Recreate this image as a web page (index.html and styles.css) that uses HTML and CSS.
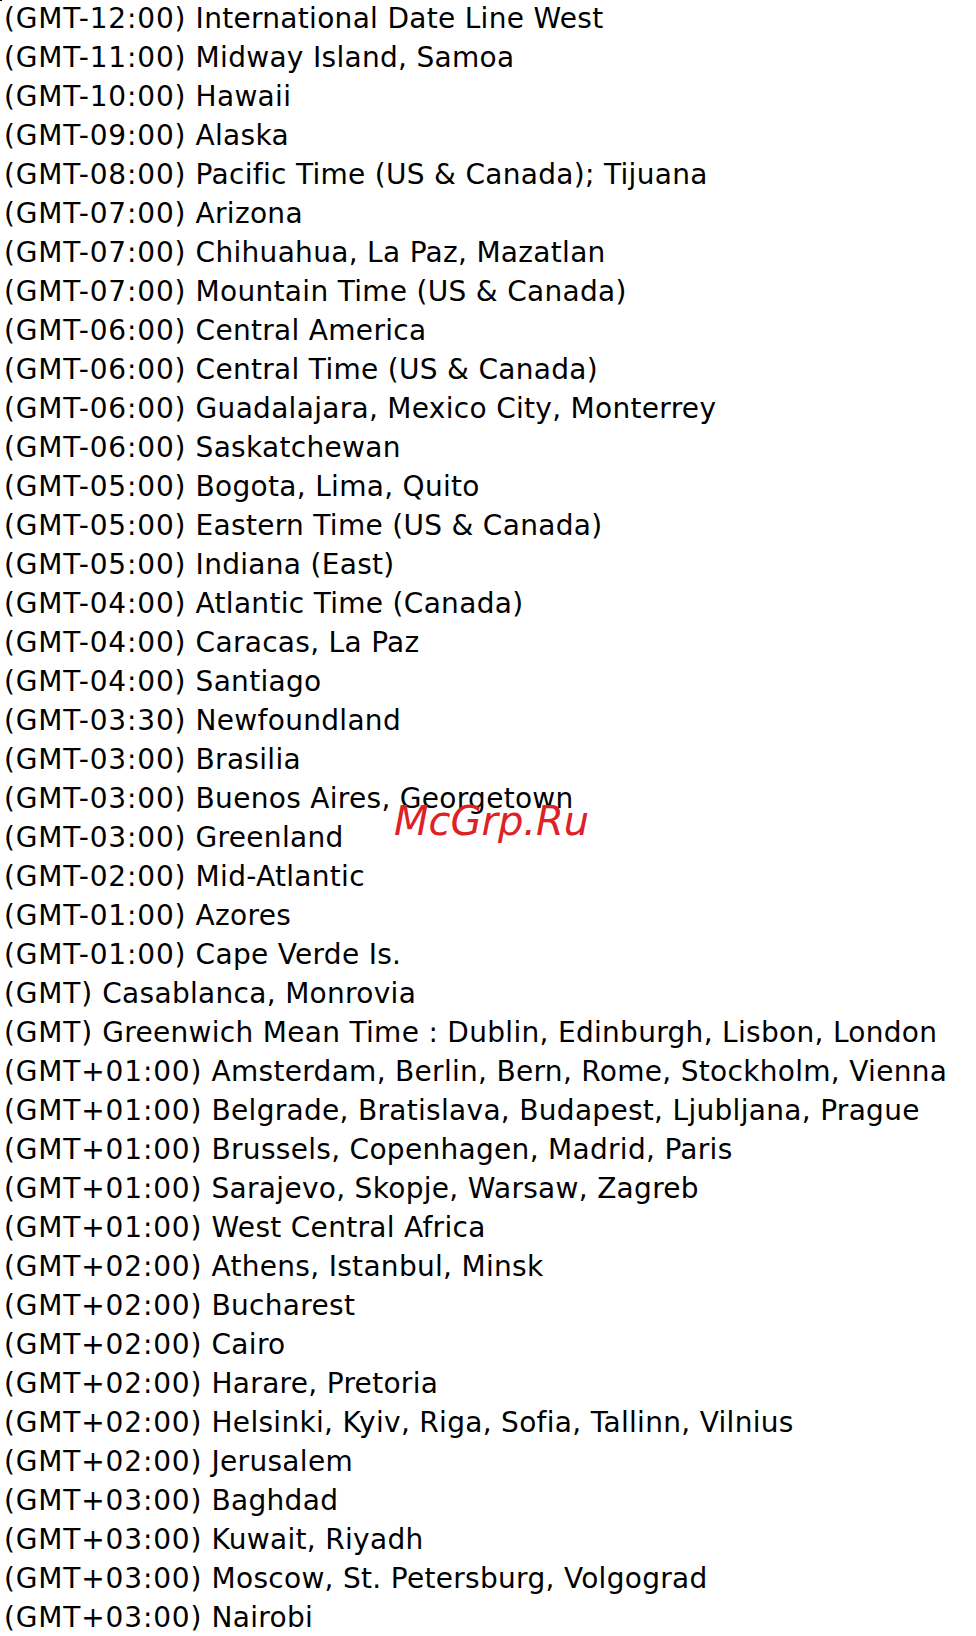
FILE: index.html
```html
<!DOCTYPE html>
<html>
<head>
<meta charset="utf-8">
<link rel="stylesheet" href="styles.css">
</head>
<body>
<div class="page">
<ul class="zones">
<li><span class="off">(GMT-12:00)</span> International Date Line West</li>
<li><span class="off">(GMT-11:00)</span> Midway Island, Samoa</li>
<li><span class="off">(GMT-10:00)</span> Hawaii</li>
<li><span class="off">(GMT-09:00)</span> Alaska</li>
<li><span class="off">(GMT-08:00)</span> Pacific Time (US &amp; Canada); Tijuana</li>
<li><span class="off">(GMT-07:00)</span> Arizona</li>
<li><span class="off">(GMT-07:00)</span> Chihuahua, La Paz, Mazatlan</li>
<li><span class="off">(GMT-07:00)</span> Mountain Time (US &amp; Canada)</li>
<li><span class="off">(GMT-06:00)</span> Central America</li>
<li><span class="off">(GMT-06:00)</span> Central Time (US &amp; Canada)</li>
<li><span class="off">(GMT-06:00)</span> Guadalajara, Mexico City, Monterrey</li>
<li><span class="off">(GMT-06:00)</span> Saskatchewan</li>
<li><span class="off">(GMT-05:00)</span> Bogota, Lima, Quito</li>
<li><span class="off">(GMT-05:00)</span> Eastern Time (US &amp; Canada)</li>
<li><span class="off">(GMT-05:00)</span> Indiana (East)</li>
<li><span class="off">(GMT-04:00)</span> Atlantic Time (Canada)</li>
<li><span class="off">(GMT-04:00)</span> Caracas, La Paz</li>
<li><span class="off">(GMT-04:00)</span> Santiago</li>
<li><span class="off">(GMT-03:30)</span> Newfoundland</li>
<li><span class="off">(GMT-03:00)</span> Brasilia</li>
<li><span class="off">(GMT-03:00)</span> Buenos Aires, Georgetown</li>
<li><span class="off">(GMT-03:00)</span> Greenland</li>
<li><span class="off">(GMT-02:00)</span> Mid-Atlantic</li>
<li><span class="off">(GMT-01:00)</span> Azores</li>
<li><span class="off">(GMT-01:00)</span> Cape Verde Is.</li>
<li><span class="off">(GMT)</span> Casablanca, Monrovia</li>
<li><span class="off">(GMT)</span> Greenwich Mean Time : Dublin, Edinburgh, Lisbon, London</li>
<li><span class="off">(GMT+01:00)</span> Amsterdam, Berlin, Bern, Rome, Stockholm, Vienna</li>
<li><span class="off">(GMT+01:00)</span> Belgrade, Bratislava, Budapest, Ljubljana, Prague</li>
<li><span class="off">(GMT+01:00)</span> Brussels, Copenhagen, Madrid, Paris</li>
<li><span class="off">(GMT+01:00)</span> Sarajevo, Skopje, Warsaw, Zagreb</li>
<li><span class="off">(GMT+01:00)</span> West Central Africa</li>
<li><span class="off">(GMT+02:00)</span> Athens, Istanbul, Minsk</li>
<li><span class="off">(GMT+02:00)</span> Bucharest</li>
<li><span class="off">(GMT+02:00)</span> Cairo</li>
<li><span class="off">(GMT+02:00)</span> Harare, Pretoria</li>
<li><span class="off">(GMT+02:00)</span> Helsinki, Kyiv, Riga, Sofia, Tallinn, Vilnius</li>
<li><span class="off">(GMT+02:00)</span> Jerusalem</li>
<li><span class="off">(GMT+03:00)</span> Baghdad</li>
<li><span class="off">(GMT+03:00)</span> Kuwait, Riyadh</li>
<li><span class="off">(GMT+03:00)</span> Moscow, St. Petersburg, Volgograd</li>
<li><span class="off">(GMT+03:00)</span> Nairobi</li>
</ul>
<span class="corner"></span>
<span class="watermark">McGrp.Ru</span>
</div>
</body>
</html>
```
FILE: styles.css
```css
html, body {
  margin: 0;
  padding: 0;
  background: #ffffff;
}
.page {
  position: relative;
  width: 976px;
  height: 1636px;
  overflow: hidden;
}
.zones {
  list-style: none;
  margin: -1px 0 0 0;
  padding: 0 0 0 4px;
  font-family: "DejaVu Sans", sans-serif;
  font-size: 28px;
  line-height: 39px;
  letter-spacing: 0.3px;
  color: #000;
  white-space: nowrap;
}
.off {
  letter-spacing: 0.85px;
}
.corner {
  position: absolute;
  left: 0;
  top: 0;
  width: 2px;
  height: 1px;
  background: #000;
}
.watermark {
  position: absolute;
  left: 394px;
  top: 798px;
  font-family: "DejaVu Sans", sans-serif;
  font-style: italic;
  font-size: 40px;
  color: #dc2226;
}
```
